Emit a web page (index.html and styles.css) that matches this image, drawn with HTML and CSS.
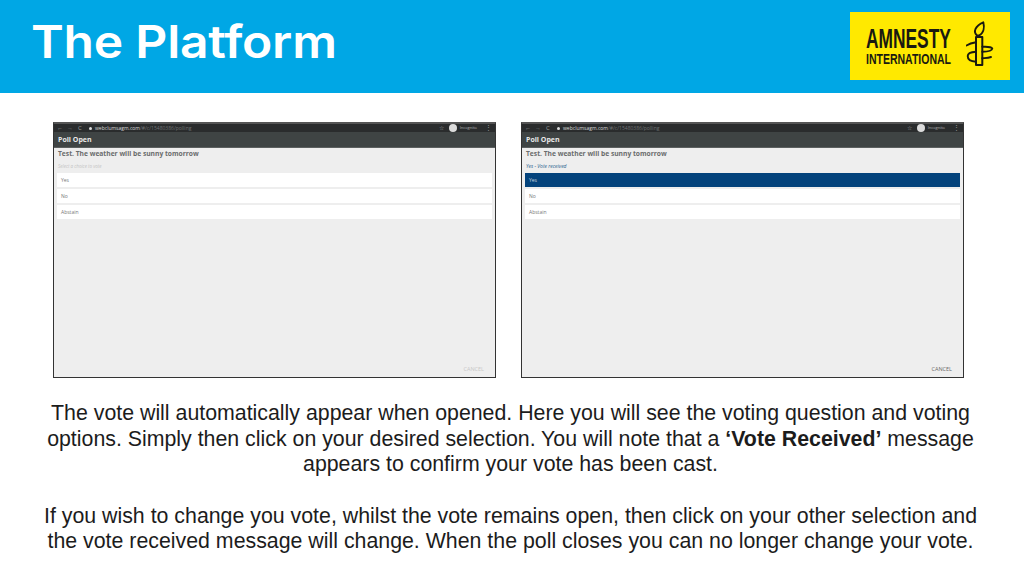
FILE: index.html
```html
<!DOCTYPE html>
<html lang="en">
<head>
<meta charset="utf-8">
<title>The Platform</title>
<link rel="stylesheet" href="styles.css">
</head>
<body>
<header class="header">
  <h1 class="title">The Platform</h1>
  <div class="logo">
    <div class="logo-text">
      <span class="logo-main">AMNESTY</span>
      <span class="logo-sub">INTERNATIONAL</span>
    </div>
    <svg class="logo-icon" viewBox="0 0 32 50" width="32" height="50" aria-hidden="true">
      <g fill="none" stroke="#1a1a10" stroke-width="1.9" stroke-linecap="round" stroke-linejoin="round">
        <path d="M11 14.5 C7 11 9 5 17.3 1.3 C18.5 6 18 12 13 14.5 Z"/>
        <path d="M10 16 H16.3 V44 H10 Z" stroke-width="2"/>
        <path d="M0.5 24.5 C3 23 6 22 10 21.3"/>
        <path d="M16.3 25.7 C20 26 25 25.5 26.3 27.5 C26 30 20 30.7 16.3 30.7"/>
        <path d="M10 30.7 C5 31 1.7 32 1.7 35 C1.7 38.5 5 40.5 10 40.7"/>
        <path d="M16.3 37.3 C19 37 22 37 25 36"/>
      </g>
    </svg>
  </div>
</header>

<main class="main">
  <section class="screens">
    <article class="shot">
      <div class="chrome">
        <div class="nav">
          <span class="nav-icon">←</span><span class="nav-icon dim">→</span><span class="nav-icon">C</span>
          <span class="lock"></span>
          <span class="url">webclumsagm.com<span class="url-dim">/#/c/15480386/polling</span></span>
        </div>
        <div class="tools">
          <span class="star">☆</span><span class="avatar"></span><span class="incog">Incognito</span><span class="dots">⋮</span>
        </div>
      </div>
      <div class="appbar">Poll Open</div>
      <div class="poll">
        <div class="question">Test. The weather will be sunny tomorrow</div>
        <div class="hint">Select a choice to vote</div>
        <div class="option">Yes</div>
        <div class="option">No</div>
        <div class="option">Abstain</div>
        <div class="cancel cancel-off">CANCEL</div>
      </div>
    </article>

    <article class="shot">
      <div class="chrome">
        <div class="nav">
          <span class="nav-icon">←</span><span class="nav-icon dim">→</span><span class="nav-icon">C</span>
          <span class="lock"></span>
          <span class="url">webclumsagm.com<span class="url-dim">/#/c/15480386/polling</span></span>
        </div>
        <div class="tools">
          <span class="star">☆</span><span class="avatar"></span><span class="incog">Incognito</span><span class="dots">⋮</span>
        </div>
      </div>
      <div class="appbar">Poll Open</div>
      <div class="poll">
        <div class="question">Test. The weather will be sunny tomorrow</div>
        <div class="hint hint-ok">Yes - Vote received</div>
        <div class="option option-on">Yes</div>
        <div class="option">No</div>
        <div class="option">Abstain</div>
        <div class="cancel">CANCEL</div>
      </div>
    </article>
  </section>

  <section class="copy">
    <p class="para">The vote will automatically appear when opened. Here you will see the voting question and voting options. Simply then click on your desired selection. You will note that a <strong>‘Vote Received’</strong> message appears to confirm your vote has been cast.</p>
    <p class="para">If you wish to change you vote, whilst the vote remains open, then click on your other selection and the vote received message will change. When the poll closes you can no longer change your vote.</p>
  </section>
</main>
</body>
</html>
```
FILE: styles.css
```css
* { box-sizing: border-box; }
html, body { margin: 0; padding: 0; }
body {
  width: 1024px;
  height: 576px;
  overflow: hidden;
  background: #fff;
  font-family: "Liberation Sans", Arial, sans-serif;
}

.header {
  height: 93px;
  background: #00a7e5;
  display: flex;
  align-items: flex-start;
  justify-content: space-between;
  padding: 12px 14px 0 31px;
}
.title {
  margin: 0;
  font-family: Inter, "Open Sans", sans-serif;
  font-weight: 600;
  font-size: 45px;
  line-height: 60px;
  letter-spacing: -0.2px;
  font-variant-ligatures: none;
  font-feature-settings: "calt" 0, "liga" 0;
  color: #fff;
  transform: scaleX(1.105);
  transform-origin: left center;
}
.logo {
  width: 160px;
  height: 68px;
  background: #ffe900;
  display: flex;
  align-items: center;
  padding-left: 16px;
  color: #1a1a10;
}
.logo-text {
  width: 84px;
  margin-right: 16px;
  flex: none;
  display: flex;
  flex-direction: column;
  white-space: nowrap;
}
.logo-main {
  font-weight: 700;
  font-size: 28px;
  line-height: 25px;
  transform: scaleX(0.62);
  transform-origin: left center;
}
.logo-sub {
  font-weight: 700;
  font-size: 15px;
  line-height: 15px;
  transform: scaleX(0.7);
  transform-origin: left center;
}
.logo-icon { flex: none; }

.main { padding-top: 29px; }
.screens {
  display: flex;
  gap: 25px;
  padding-left: 53px;
}
.shot {
  width: 443px;
  height: 256px;
  border: 1px solid #333;
  border-top: 2px solid #555;
  background: #eee;
  display: flex;
  flex-direction: column;
  position: relative;
  font-family: "Open Sans", sans-serif;
}
.chrome {
  height: 8px;
  background: #2a2c2d;
  display: flex;
  align-items: center;
  justify-content: space-between;
  padding: 0 3px 0 1px;
  color: #9a9c9d;
  font-size: 5px;
}
.nav, .tools { display: flex; align-items: center; }
.nav-icon { width: 10px; text-align: center; font-size: 6px; line-height: 8px; }
.nav-icon.dim { color: #77797b; }
.lock {
  width: 3px;
  height: 3px;
  margin: 0 3px 0 4px;
  background: #ddd;
  border-radius: 50%;
}
.url { color: #d8d8d8; font-size: 5px; line-height: 8px; white-space: nowrap; }
.url-dim { color: #6f7173; }
.tools { gap: 5px; }
.star { font-size: 6px; line-height: 8px; }
.avatar { width: 8px; height: 8px; border-radius: 50%; background: #dcdcdc; }
.incog { font-size: 4px; line-height: 8px; color: #b5b5b5; margin-right: 3px; margin-left: -2px; }
.dots { font-size: 7px; line-height: 8px; }

.appbar {
  height: 16px;
  background: #3f4444;
  color: #e8e8e8;
  font-size: 7px;
  font-weight: 700;
  line-height: 15px;
  padding-left: 4px;
  border-bottom: 1px solid #5c6060;
}
.poll {
  flex: 1;
  padding: 0 3px;
  display: flex;
  flex-direction: column;
  position: relative;
}
.question {
  font-size: 6.7px;
  font-weight: 700;
  line-height: 12px;
  color: #6a6c6c;
  padding: 0 1px;
}
.hint {
  font-size: 4.5px;
  line-height: 10px;
  height: 10px;
  margin-top: 1px;
  color: #c4c4c4;
  padding: 0 1px;
  font-style: italic;
}
.hint-ok { color: #1f5d8c; font-size: 5px; }
.option {
  height: 14px;
  margin-top: 2px;
  background: #fff;
  font-size: 5px;
  line-height: 14px;
  padding-left: 4px;
  color: #777;
}
.option-on {
  background: #04437c;
  color: #c5d3df;
}
.cancel {
  position: absolute;
  right: 11px;
  bottom: 4px;
  font-size: 5.5px;
  line-height: 8px;
  color: #6a6a6a;
}
.cancel-off { color: #c8c8c8; }

.copy {
  padding: 23px 0 0 0;
  width: 1021px;
}
.para {
  margin: 0 auto 26px;
  width: 940px;
  font-size: 21.33px;
  line-height: 25.6px;
  text-align: center;
  color: #1c1c1c;
}
```
